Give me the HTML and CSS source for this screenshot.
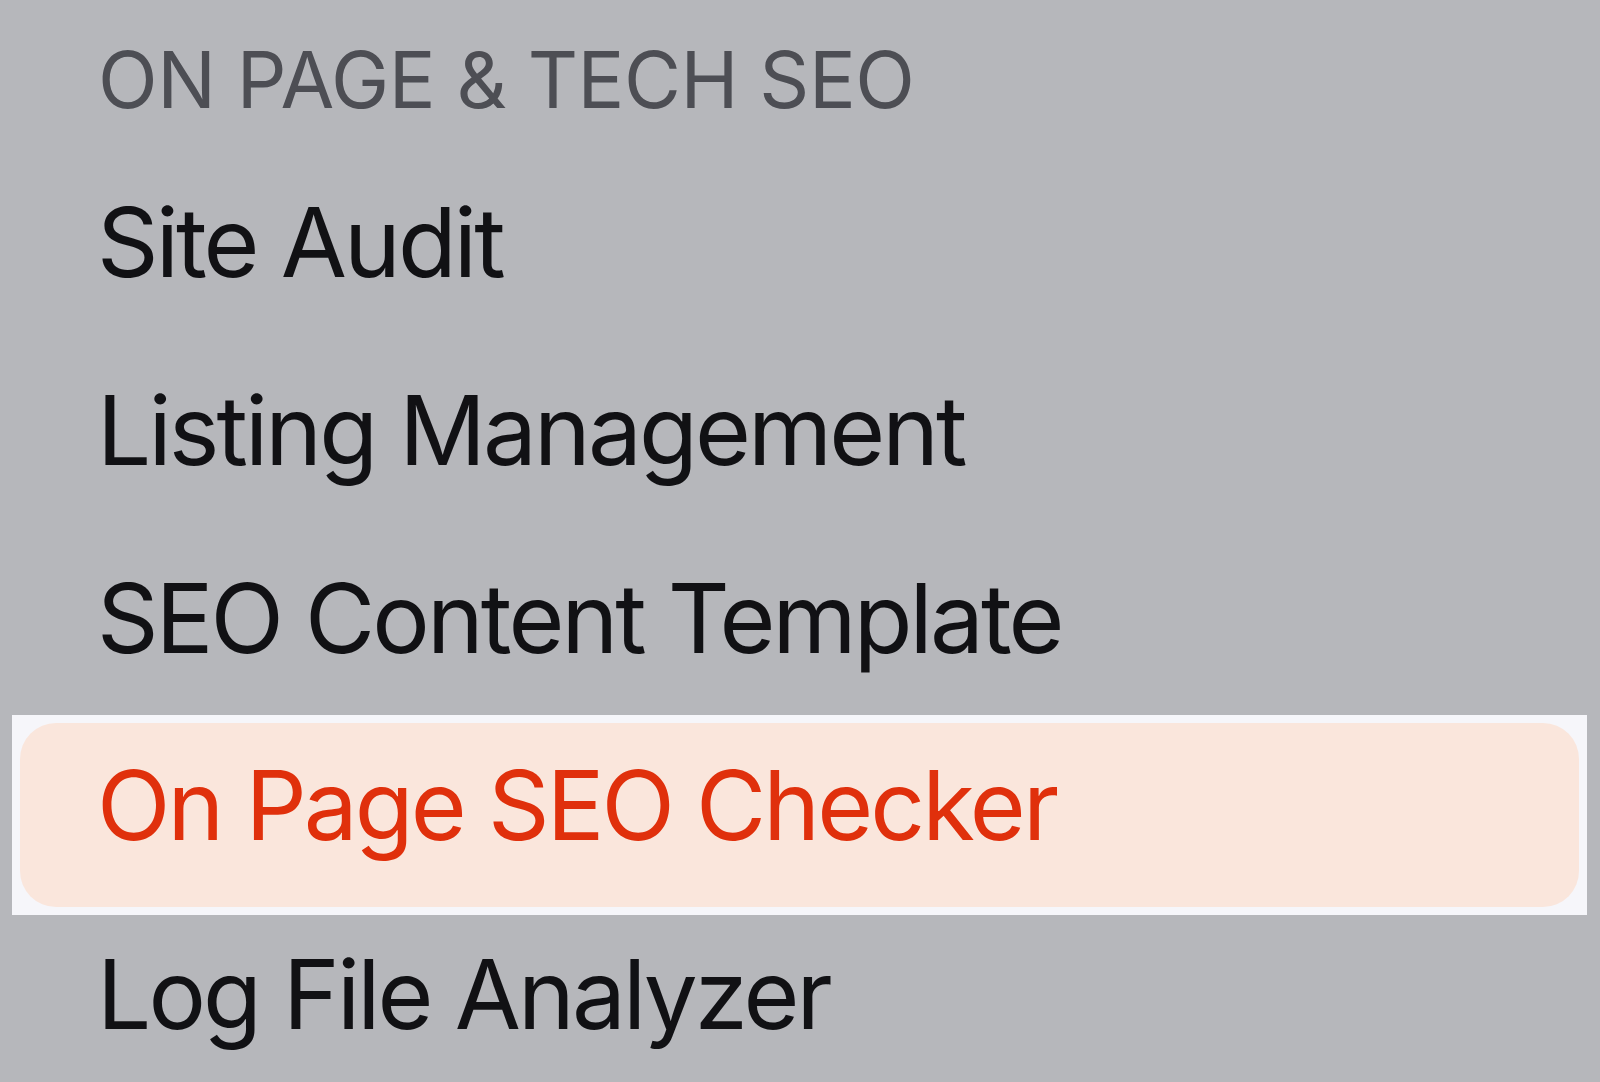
FILE: index.html
```html
<!DOCTYPE html>
<html lang="en">
<head>
    <meta charset="UTF-8">
    <title>On Page &amp; Tech SEO</title>
    <link rel="stylesheet" href="styles.css">
</head>
<body>
    <div class="menu">
        <div class="menu-title">ON PAGE &amp; TECH SEO</div>
        <a class="item" href="#">Site Audit</a>
        <a class="item" href="#">Listing Management</a>
        <a class="item" href="#">SEO Content Template</a>
        <div class="frame">
            <a class="item active" href="#">On Page SEO Checker</a>
        </div>
        <a class="item" href="#">Log File Analyzer</a>
    </div>
</body>
</html>
```

FILE: styles.css
```css
* {
    margin: 0;
    padding: 0;
    box-sizing: border-box;
}
body {
    background-color: #b6b7bb;
    font-family: Inter, "Noto Sans", sans-serif;
    overflow: hidden;
}
.menu {
    width: 1600px;
    height: 1082px;
}
.menu-title {
    padding: 11px 0 0 98px;
    line-height: 137px;
    font-size: 78px;
    color: #4d4e54;
    letter-spacing: -0.5px;
}
.item {
    display: block;
    padding-left: 97px;
    line-height: 188px;
    font-size: 96px;
    letter-spacing: -2.9px;
    color: #111114;
    text-decoration: none;
    white-space: nowrap;
}
/* 选中项外面的白框 */
.frame {
    margin: 3px 13px 0 12px;
    padding: 8px;
    background-color: #f6f6fa;
}
.item.active {
    height: 184px;
    padding-left: 77px;
    line-height: 165px;
    background-color: #fae6dc;
    border-radius: 36px;
    color: #e0300c;
}
.frame + .item {
    line-height: 159px;
}
```
